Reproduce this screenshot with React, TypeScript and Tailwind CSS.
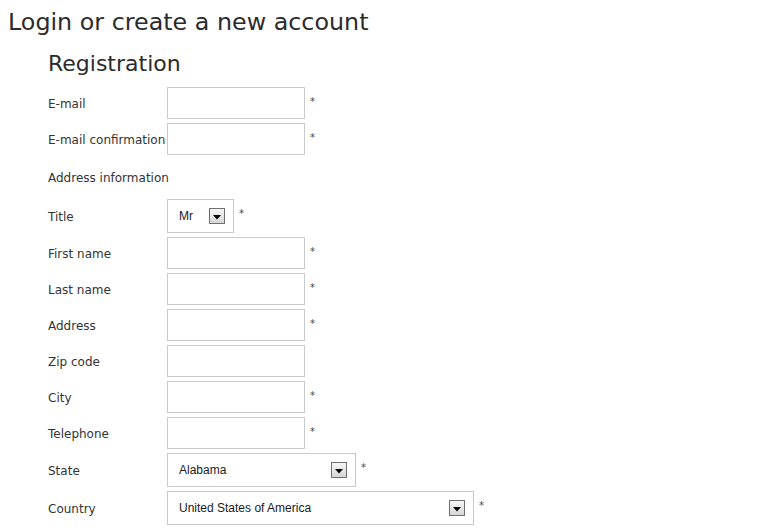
import React from "react";

function Arrow() {
  return (
    <span className="flex h-[16px] w-[16px] items-center justify-center border border-[#6f6f6f] bg-gradient-to-b from-[#f6f6f6] to-[#d6d6d6]">
      <svg width="8" height="5" viewBox="0 0 8 5" className="mt-[2px]">
        <polygon points="0,0 8,0 4,4.5" fill="#000" />
      </svg>
    </span>
  );
}

function Star() {
  return <span className="ml-[5px] pt-[10px] text-[10px] leading-[10px] text-[#444]">*</span>;
}

function TextRow({ label, required = true }: { label: string; required?: boolean }) {
  return (
    <div className="flex items-start">
      <div className="flex h-[32px] w-[119px] items-center whitespace-nowrap pt-[2px]">{label}</div>
      <input className="h-[32px] w-[138px] border border-[#c9c9c9] bg-white outline-none" />
      {required && <Star />}
    </div>
  );
}

function SelectRow({ label, value, width }: { label: string; value: string; width: string }) {
  return (
    <div className="flex items-start">
      <div className="flex h-[34px] w-[119px] items-center whitespace-nowrap pt-[2px]">{label}</div>
      <div
        className={`flex h-[34px] items-center justify-between border border-[#c9c9c9] bg-white pl-[11px] pr-[8px] font-['Liberation_Sans',sans-serif] text-[12px] text-[#1a1a1a] ${width}`}
      >
        <span>{value}</span>
        <Arrow />
      </div>
      <Star />
    </div>
  );
}

export default function App() {
  return (
    <div className="min-h-screen bg-white pl-[8px] pt-[8px] font-['DejaVu_Sans',sans-serif] text-[#333]">
      <h1 className="text-[23.8px] leading-[29px] text-[#2b2b2b]">Login or create a new account</h1>

      <div className="pl-[40px]">
        <h2 className="mt-[14px] text-[22px] leading-[26px] text-[#2b2b2b]">Registration</h2>

        <form className="mt-[10px] flex flex-col gap-[4px] text-[12px]">
          <TextRow label="E-mail" />
          <TextRow label="E-mail confirmation" />
          <div className="flex h-[36px] items-center pt-[2px]">Address information</div>
          <SelectRow label="Title" value="Mr" width="w-[67px]" />
          <TextRow label="First name" />
          <TextRow label="Last name" />
          <TextRow label="Address" />
          <TextRow label="Zip code" required={false} />
          <TextRow label="City" />
          <TextRow label="Telephone" />
          <SelectRow label="State" value="Alabama" width="w-[189px]" />
          <SelectRow label="Country" value="United States of America" width="w-[307px]" />
        </form>
      </div>
    </div>
  );
}
